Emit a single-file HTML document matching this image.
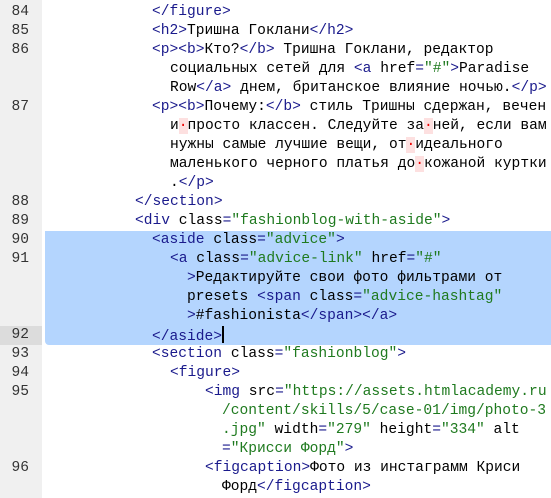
<!DOCTYPE html>
<html><head><meta charset="utf-8"><style>
body{margin:0;width:551px;height:498px;overflow:hidden;background:#fff;position:relative;font-family:"Liberation Mono","DejaVu Sans Mono",monospace;font-size:14.6px;}
.g{position:absolute;left:0;top:0;width:42px;height:498px;background:#f0f0f0;}
.sel{position:absolute;left:45px;top:231px;width:506px;height:114px;background:#b4d5fe;border-radius:0 0 0 4px;}
.g92{position:absolute;left:0;top:326px;width:42px;height:19px;background:#dcdcdc;}
.n{position:absolute;left:0;width:29px;text-align:right;color:#333;line-height:19px;}
.l{position:absolute;white-space:pre;line-height:19px;color:#000;}
.t{color:#1a1a8c}.s{color:#1f7a1f}
.nb{background:#fde0e0;color:#e00;}
.cur{display:inline-block;width:2px;height:17px;background:#000;vertical-align:-3px;}
</style></head><body>
<div class="g"></div><div class="g92"></div><div class="sel"></div>
<div class="n" style="top:3px">84</div>
<div class="n" style="top:22px">85</div>
<div class="n" style="top:41px">86</div>
<div class="n" style="top:98px">87</div>
<div class="n" style="top:193px">88</div>
<div class="n" style="top:212px">89</div>
<div class="n" style="top:231px">90</div>
<div class="n" style="top:250px">91</div>
<div class="n" style="top:326px">92</div>
<div class="n" style="top:345px">93</div>
<div class="n" style="top:364px">94</div>
<div class="n" style="top:383px">95</div>
<div class="n" style="top:459px">96</div>

<div class="l" style="left:152px;top:3px"><span class="t">&lt;/figure&gt;</span></div>
<div class="l" style="left:152px;top:22px"><span class="t">&lt;h2&gt;</span>Тришна Гоклани<span class="t">&lt;/h2&gt;</span></div>
<div class="l" style="left:152px;top:41px"><span class="t">&lt;p&gt;&lt;b&gt;</span>Кто?<span class="t">&lt;/b&gt;</span> Тришна Гоклани, редактор</div>
<div class="l" style="left:170px;top:60px">социальных сетей для <span class="t">&lt;a </span>href<span class="t">=</span><span class="s">"#"</span><span class="t">&gt;</span>Paradise</div>
<div class="l" style="left:170px;top:79px">Row<span class="t">&lt;/a&gt;</span> днем, британское влияние ночью.<span class="t">&lt;/p&gt;</span></div>
<div class="l" style="left:152px;top:98px"><span class="t">&lt;p&gt;&lt;b&gt;</span>Почему:<span class="t">&lt;/b&gt;</span> стиль Тришны сдержан, вечен</div>
<div class="l" style="left:170px;top:117px">и<span class="nb">·</span>просто классен. Следуйте за<span class="nb">·</span>ней, если вам</div>
<div class="l" style="left:170px;top:136px">нужны самые лучшие вещи, от<span class="nb">·</span>идеального</div>
<div class="l" style="left:170px;top:155px">маленького черного платья до<span class="nb">·</span>кожаной куртки</div>
<div class="l" style="left:170px;top:174px">.<span class="t">&lt;/p&gt;</span></div>
<div class="l" style="left:135px;top:193px"><span class="t">&lt;/section&gt;</span></div>
<div class="l" style="left:135px;top:212px"><span class="t">&lt;div </span>class<span class="t">=</span><span class="s">"fashionblog-with-aside"</span><span class="t">&gt;</span></div>
<div class="l" style="left:152px;top:231px"><span class="t">&lt;aside </span>class<span class="t">=</span><span class="s">"advice"</span><span class="t">&gt;</span></div>
<div class="l" style="left:170px;top:250px"><span class="t">&lt;a </span>class<span class="t">=</span><span class="s">"advice-link"</span> href<span class="t">=</span><span class="s">"#"</span></div>
<div class="l" style="left:187px;top:269px"><span class="t">&gt;</span>Редактируйте свои фото фильтрами от</div>
<div class="l" style="left:187px;top:288px">presets <span class="t">&lt;span </span>class<span class="t">=</span><span class="s">"advice-hashtag"</span></div>
<div class="l" style="left:187px;top:307px"><span class="t">&gt;</span>#fashionista<span class="t">&lt;/span&gt;&lt;/a&gt;</span></div>
<div class="l" style="left:152px;top:326px"><span class="t">&lt;/aside&gt;</span><span class="cur"></span></div>
<div class="l" style="left:152px;top:345px"><span class="t">&lt;section </span>class<span class="t">=</span><span class="s">"fashionblog"</span><span class="t">&gt;</span></div>
<div class="l" style="left:170px;top:364px"><span class="t">&lt;figure&gt;</span></div>
<div class="l" style="left:205px;top:383px"><span class="t">&lt;img </span>src<span class="t">=</span><span class="s">"https://assets.htmlacademy.ru</span></div>
<div class="l" style="left:222px;top:402px"><span class="s">/content/skills/5/case-01/img/photo-3</span></div>
<div class="l" style="left:222px;top:421px"><span class="s">.jpg"</span> width<span class="t">=</span><span class="s">"279"</span> height<span class="t">=</span><span class="s">"334"</span> alt</div>
<div class="l" style="left:222px;top:440px"><span class="t">=</span><span class="s">"Крисси Форд"</span><span class="t">&gt;</span></div>
<div class="l" style="left:205px;top:459px"><span class="t">&lt;figcaption&gt;</span>Фото из инстаграмм Криси</div>
<div class="l" style="left:222px;top:478px">Форд<span class="t">&lt;/figcaption&gt;</span></div>
</body></html>
